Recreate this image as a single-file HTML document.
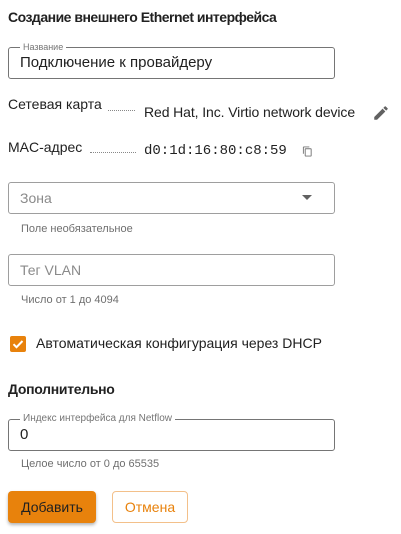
<!DOCTYPE html>
<html><head><meta charset="utf-8"><style>
body{margin:0;width:401px;height:534px;background:#fff;font-family:"Liberation Sans",Roboto,sans-serif;color:#212121;position:relative;overflow:hidden}
.a{position:absolute;white-space:nowrap}
.box{position:absolute;left:8px;width:325px;height:30px;border:1px solid #757575;border-radius:3px}
.lbl{position:absolute;font-size:9px;color:#757575;background:#fff;padding:0 3px;top:-7px;left:11px;line-height:12px}
.val{position:absolute;left:11px;top:7px;font-size:15px;line-height:16px;color:#212121}
.hint{font-size:11px;color:#6f6f6f}
.dots{position:absolute;border-bottom:1px dotted #888;height:0}
</style></head><body>
<div class="a" style="left:8px;top:9px;font-size:14px;font-weight:bold;letter-spacing:-0.5px">Создание внешнего Ethernet интерфейса</div>

<div class="box" style="top:47px"><span class="lbl">Название</span><span class="val">Подключение к провайдеру</span></div>

<div class="a" style="left:8px;top:96px;font-size:14px">Сетевая карта</div>
<div class="dots" style="left:108px;width:27px;top:110px"></div>
<div class="a" style="left:144px;top:104px;font-size:14px;letter-spacing:-0.1px">Red Hat, Inc. Virtio network device</div>
<svg class="a" style="left:372px;top:104px" width="18" height="18" viewBox="0 0 24 24"><path fill="#616161" d="M3 17.25V21h3.75L17.81 9.94l-3.75-3.75L3 17.25zM20.71 7.04a1 1 0 000-1.41l-2.34-2.34a1 1 0 00-1.41 0l-1.83 1.83 3.75 3.75 1.83-1.83z"/></svg>

<div class="a" style="left:8px;top:139px;font-size:14px">MAC-адрес</div>
<div class="dots" style="left:90px;width:46px;top:152px"></div>
<div class="a" style="left:144px;top:143px;font-size:14px;font-family:'Liberation Mono',monospace">d0:1d:16:80:c8:59</div>
<svg class="a" style="left:302px;top:146px" width="11" height="11" viewBox="0 0 24 24"><path fill="#757575" d="M16 1H4c-1.1 0-2 .9-2 2v14h2V3h12V1zm3 4H8c-1.1 0-2 .9-2 2v14c0 1.1.9 2 2 2h11c1.1 0 2-.9 2-2V7c0-1.1-.9-2-2-2zm0 16H8V7h11v14z"/></svg>

<div class="box" style="top:182px;border-color:#9e9e9e"><span class="val" style="color:#8a8a8a;font-size:14px">Зона</span>
<svg style="position:absolute;left:293px;top:12px" width="10" height="6"><path d="M0 0h10L5 5z" fill="#616161"/></svg></div>
<div class="a hint" style="left:21px;top:223px">Поле необязательное</div>

<div class="box" style="top:254px;border-color:#9e9e9e"><span class="val" style="color:#8a8a8a;font-size:14px">Тег VLAN</span></div>
<div class="a hint" style="left:21px;top:294px">Число от 1 до 4094</div>

<div class="a" style="left:10px;top:336px;width:16px;height:16px;background:#e8820c;border-radius:2px"><svg width="16" height="16"><path d="M3.5 8.2l3 3 6-6.2" stroke="#fff" stroke-width="2" fill="none"/></svg></div>
<div class="a" style="left:36px;top:335px;font-size:14px">Автоматическая конфигурация через DHCP</div>

<div class="a" style="left:8px;top:381px;font-size:14px;font-weight:bold;letter-spacing:-0.3px">Дополнительно</div>

<div class="box" style="top:419px"><span class="lbl" style="font-size:10px">Индекс интерфейса для Netflow</span><span class="val">0</span></div>
<div class="a hint" style="left:21px;top:458px">Целое число от 0 до 65535</div>

<div class="a" style="left:8px;top:491px;width:88px;height:32px;background:#e8820c;border-radius:4px;box-shadow:0 2px 3px rgba(0,0,0,.3);font-size:14px;line-height:32px;text-align:center;color:#212121">Добавить</div>
<div class="a" style="left:112px;top:491px;width:74px;height:30px;border:1px solid #f3c08a;border-radius:4px;font-size:14px;line-height:30px;text-align:center;color:#e8820c">Отмена</div>
</body></html>
